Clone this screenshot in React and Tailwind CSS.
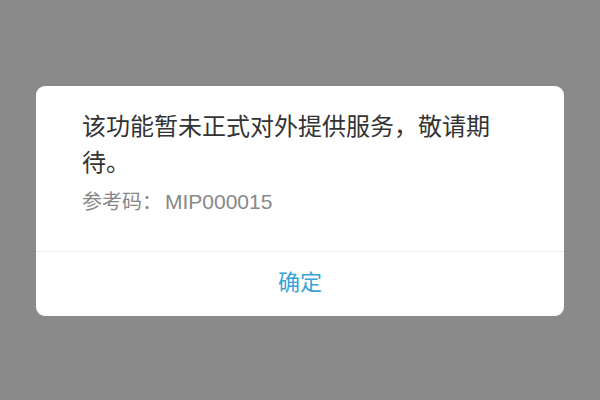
export default function App() {
  return (
    <div
      className="flex h-[400px] w-[600px] items-start justify-center bg-[#8a8a8a] pt-[86px]"
      style={{ fontFamily: '"Liberation Sans", "Noto Sans CJK SC", sans-serif' }}
    >
      <div className="w-[528px] overflow-hidden rounded-[9px] bg-white">
        <div className="h-[165px] pl-[46px] pt-[23px]">
          <div className="w-[425px] text-[24px] leading-[36px] text-[#333333]">
            该功能暂未正式对外提供服务，敬请期待。
          </div>
          <div className="mt-[8px] text-[20px] leading-[26px] text-[#888888]">
            参考码：<span className="ml-[3px] text-[21px]">MIP000015</span>
          </div>
        </div>
        <div className="h-px bg-[#eeeeee]" />
        <button
          type="button"
          className="flex h-[64px] w-full items-center justify-center pb-[4px] text-[22px] text-[#3aa3d6]"
        >
          确定
        </button>
      </div>
    </div>
  );
}
